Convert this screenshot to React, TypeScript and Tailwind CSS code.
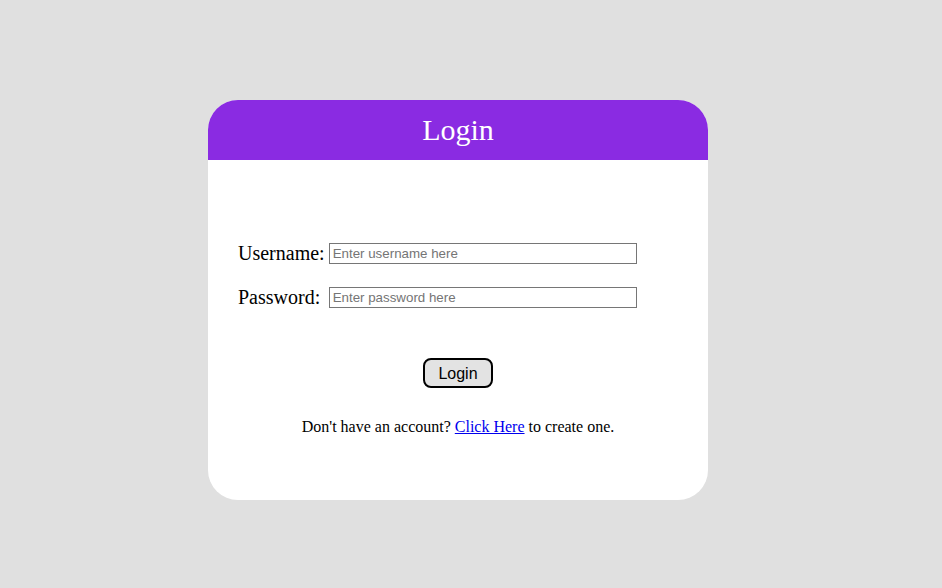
import React from 'react';

const serif = { fontFamily: '"Liberation Serif", "Times New Roman", serif' };

const App: React.FC = () => {
  return (
    <div className="min-h-[588px] w-full bg-[#e0e0e0] pt-[100px] pl-[208px] font-['Liberation_Serif',serif]">
      <div className="w-[500px] h-[400px] bg-white rounded-[30px] overflow-hidden flex flex-col">
        {/* header */}
        <div className="h-[60px] bg-[#8a2be2] flex items-center justify-center">
          <h1 className="text-[30px] leading-none text-white" style={serif}>Login</h1>
        </div>

        <div className="px-[30px] pt-[82px] flex flex-col" style={serif}>
          <div className="grid grid-cols-[auto_auto] justify-start gap-x-[4px] gap-y-[21px] items-center">
            <label className="text-[20px] leading-[23px] text-black">Username:</label>
            <input
              type="text"
              placeholder="Enter username here"
              className="w-[308px] h-[21px] border border-[#767676] px-[3px] text-[13.33px] font-['Liberation_Sans',Arial,sans-serif] placeholder:text-[#757575] outline-none"
            />
            <label className="text-[20px] leading-[23px] text-black">Password:</label>
            <input
              type="password"
              placeholder="Enter password here"
              className="w-[308px] h-[21px] border border-[#767676] px-[3px] text-[13.33px] font-['Liberation_Sans',Arial,sans-serif] placeholder:text-[#757575] outline-none"
            />
          </div>

          <div className="mt-[49px] flex justify-center">
            <button className="w-[70px] h-[30px] border-2 border-black rounded-[8px] bg-[#e3e3e3] text-[16px] text-black pt-[1px] font-['Liberation_Sans',Arial,sans-serif]">
              Login
            </button>
          </div>

          <p className="mt-[29px] text-center text-[16px] leading-[19px] text-black">
            Don't have an account? <a href="#" className="text-[#0000ee] underline">Click Here</a> to create one.
          </p>
        </div>
      </div>
    </div>
  );
};

export default App;
